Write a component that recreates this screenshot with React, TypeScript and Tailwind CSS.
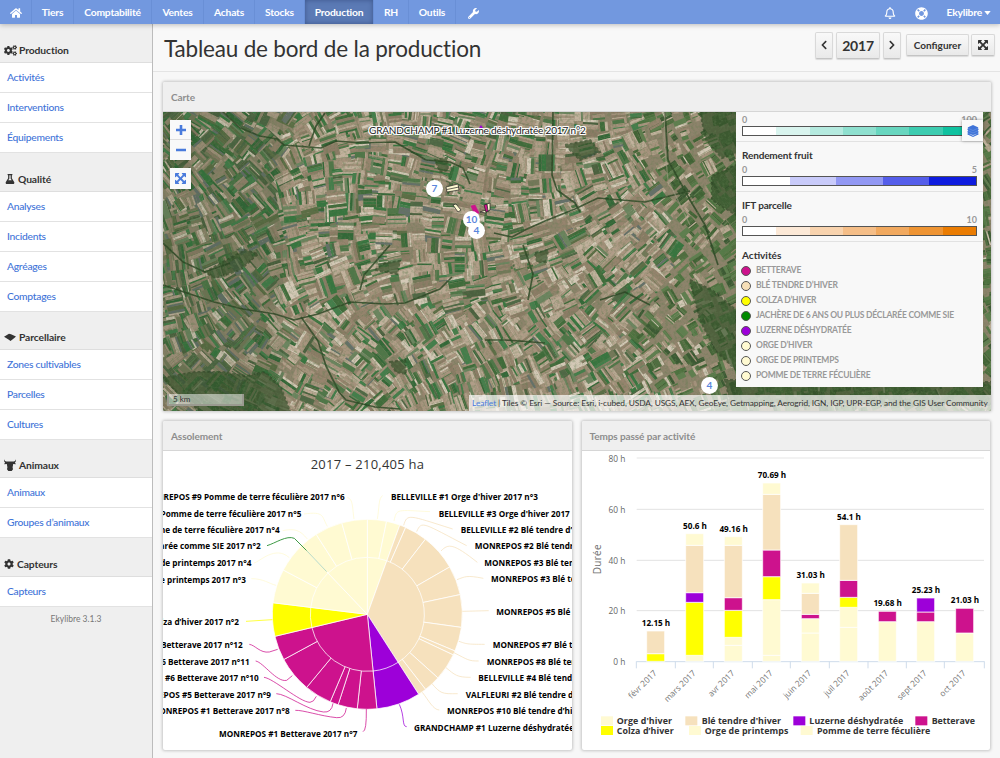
import React from "react";
import {
  FaHome, FaWrench, FaRegBell, FaLifeRing, FaCogs, FaFlask, FaCog,
  FaChevronLeft, FaChevronRight,
} from "react-icons/fa";

const CREAM = "#fffad2";
const TAN = "#f6e1bd";
const YELLOW = "#ffff00";
const PURPLE = "#9d00d9";
const PINK = "#cd128d";

/* ---------- icons ---------- */

const ExpandIcon = ({ className }: { className?: string }) => (
  <svg viewBox="0 0 12 12" className={className} fill="currentColor">
    <path d="M0 .5Q0 0 .5 0H4.2Q4.9.3 4.5.8L3.4 1.9 6 4.5 8.6 1.9 7.5.8Q7.100.3 7.800 0H11.500Q12 0 12 .5V4.200Q11.700 4.900 11.200 4.500L10.100 3.400 7.500 6 10.100 8.600 11.200 7.500Q11.700 7.100 12 7.800V11.500Q12 12 11.500 12H7.800Q7.100 11.700 7.500 11.200L8.600 10.100 6 7.500 3.400 10.100 4.500 11.200Q4.900 11.700 4.200 12H.5Q0 12 0 11.500V7.800Q.3 7.100.8 7.500L1.900 8.600 4.500 6 1.900 3.400.8 4.500Q.3 4.900 0 4.200Z" />
  </svg>
);

const FieldIcon = ({ className }: { className?: string }) => (
  <svg viewBox="0 0 12 12" className={className} fill="currentColor">
    <path d="M0 5.800 5 2.800 7 3.300 12 5.600 10 7.300 6.500 10 4.500 8.600Z" />
  </svg>
);

const BullIcon = ({ className }: { className?: string }) => (
  <svg viewBox="0 0 12 12" className={className} fill="currentColor">
    <path d="M.7 0Q0 2.600 2.500 2.500H9.500Q12 2.600 11.300 0 12.700 2.200 10.900 3.500L11.900 5.200 9.200 4.900 8.600 8.300 9 10.200 7.700 12H4.300L3 10.200 3.400 8.300 2.800 4.900.1 5.200 1.100 3.500Q-.7 2.200.7 0Z" />
  </svg>
);

const LayersIcon = ({ className }: { className?: string }) => (
  <svg viewBox="0 0 12 12" className={className} fill="currentColor">
    <path d="M6 0 11.500 2.500 6 5 .5 2.500Z" />
    <path d="M.5 3.500 6 6 11.500 3.500V5.100L6 7.600.5 5.100ZM.5 6 6 8.500 11.500 6V7.400L6 9.900.5 7.400ZM.5 8.300 6 10.800 11.500 8.300V9.500L6 12 .5 9.500Z" />
    <path d="M1 2.500H11V9.500H1Z" opacity=".85" />
  </svg>
);

/* ---------- navigation ---------- */

const tabs = [
  { label: "Tiers", w: "w-[42px]" },
  { label: "Comptabilité", w: "w-[78px]" },
  { label: "Ventes", w: "w-[52px]" },
  { label: "Achats", w: "w-[51px]" },
  { label: "Stocks", w: "w-[50px]" },
  { label: "Production", w: "w-[69px]", active: true },
  { label: "RH", w: "w-[35px]" },
  { label: "Outils", w: "w-[47px]" },
];

function TopBar() {
  return (
    <nav className="relative z-10 flex h-6 items-stretch bg-[#7298df] text-[10.300px] font-bold tracking-[-0.2px] text-white shadow-[0_1px_5px_rgba(0,0,0,0.25)]">
      <div className="flex w-8 items-center justify-center border-r border-[#698fd6] pt-px">
        <FaHome className="size-[12px]" />
      </div>
      {tabs.map((t) => (
        <div
          key={t.label}
          className={`${t.w} flex items-center justify-center border-r border-[#698fd6] pt-[2px] ${
            t.active ? "bg-[#5b7ab5] shadow-[inset_0_0_5px_rgba(30,50,100,0.5)]" : ""
          }`}
        >
          {t.label}
        </div>
      ))}
      <div className="flex w-[35px] items-center justify-center pt-[2px]">
        <FaWrench className="size-[11px]" />
      </div>
      <div className="ml-auto flex items-center pr-[9px] pt-[2px]">
        <FaRegBell className="mr-[19px] size-[12px]" />
        <FaLifeRing className="mr-[19px] size-[13px]" />
        <span>Ekylibre</span>
        <svg viewBox="0 0 8 5" className="ml-[2px] h-[4px] w-[7px]" fill="currentColor"><path d="M0 0H8L4 5Z" /></svg>
      </div>
    </nav>
  );
}

const sections = [
  { title: "Production", icon: <FaCogs className="size-[13px]" />, h: "h-[39px]", gap: "gap-[2px]", items: ["Activités", "Interventions", "Équipements"] },
  { title: "Qualité", icon: <FaFlask className="mx-px size-[10px]" />, h: "h-[39px]", gap: "gap-[2px]", items: ["Analyses", "Incidents", "Agréages", "Comptages"] },
  { title: "Parcellaire", icon: <FieldIcon className="size-[12px]" />, h: "h-[38px]", gap: "gap-[3px]", items: ["Zones cultivables", "Parcelles", "Cultures"] },
  { title: "Animaux", icon: <BullIcon className="size-[12px]" />, h: "h-[38px]", gap: "gap-[3px]", items: ["Animaux", "Groupes d’animaux"] },
  { title: "Capteurs", icon: <FaCog className="size-[10px]" />, h: "h-[39px]", gap: "gap-[3px]", items: ["Capteurs"] },
];

function Sidebar() {
  return (
    <aside className="w-[153px] shrink-0 border-r border-[#bcbcbc] bg-[#efefef] text-[10.300px]">
      {sections.map((s) => (
        <section key={s.title}>
          <h2 className={`${s.h} ${s.gap} flex items-end border-b border-[#dedede] pb-[5px] pl-1 font-bold leading-[14px] tracking-[-0.1px] text-[#333]`}>
            <span className="flex h-[14px] items-center">{s.icon}</span>
            {s.title}
          </h2>
          <ul>
            {s.items.map((i) => (
              <li key={i} className="flex h-[30px] items-center border-b border-[#e2e2e2] bg-white pl-[7px] font-medium tracking-[-0.260px] text-[#3f74d8]">
                {i}
              </li>
            ))}
          </ul>
        </section>
      ))}
      <p className="pt-[5px] text-center text-[8.500px] leading-[14px] text-[#777]">Ekylibre 3.1.3</p>
    </aside>
  );
}

const btn =
  "flex items-center justify-center rounded-[2px] border border-[#d9d9d9] border-b-[#c4c4c4] bg-gradient-to-b from-[#f9f9f9] to-[#e9e9e9] text-[#333] shadow-[0_1px_1px_rgba(0,0,0,0.12)]";

function TitleBar() {
  return (
    <header className="flex h-12 items-center border-b border-[#e4e4e4] bg-[#f8f8f8] pl-[11px] pr-[5px]">
      <h1 className="pt-[2px] text-[22.500px] leading-[30px] tracking-[-0.190px] text-[#333]">Tableau de bord de la production</h1>
      <div className="-mt-[5px] ml-auto flex items-center">
        <div className={`${btn} h-[27px] w-[18px]`}><FaChevronLeft className="size-[10px]" /></div>
        <div className={`${btn} ml-[3px] h-[27px] w-[44px] text-[14px] font-bold tracking-[-0.200px]`}>2017</div>
        <div className={`${btn} ml-[3px] h-[27px] w-[18px]`}><FaChevronRight className="size-[10px]" /></div>
        <div className={`${btn} ml-[5px] h-[22px] w-[63px] text-[10px] font-bold`}>Configurer</div>
        <div className={`${btn} ml-[2px] h-[22px] w-[24px]`}><ExpandIcon className="size-[10px]" /></div>
      </div>
    </header>
  );
}

function Card({ title, className, children }: { title: string; className: string; children: React.ReactNode }) {
  return (
    <section className={`${className} flex flex-col overflow-hidden rounded-[2px] bg-white shadow-[0_0_3px_1px_rgba(0,0,0,0.2)]`}>
      <h3 className="h-[30px] shrink-0 border-b border-[#d6d6d6] bg-[#efefef] pl-2 text-[10px] font-bold leading-[30px] tracking-[-0.100px] text-[#8d8d8d]">
        {title}
      </h3>
      {children}
    </section>
  );
}

/* ---------- map ---------- */

function makeRandom(seed: number) {
  let s = seed;
  return () => {
    s = (s * 1664525 + 1013904223) >>> 0;
    return s / 4294967296;
  };
}

const soil = ["#a8957f", "#b9a893", "#96846e", "#a3917b", "#d3c8b6", "#8c7c66", "#b09d88", "#c2b29d"];
const crops = ["#37753f", "#437e4b", "#4f7648", "#3f6b3a", "#336838", "#6c8560"];
const dim = ["#5c6d45", "#747859", "#4b603f", "#65706a", "#90866c", "#4f6745"];
const woods = ["#416335", "#4d723f", "#3b5933", "#567a48", "#5f7f4f", "#4f6d3f"];

function buildFields() {
  const rnd = makeRandom(77);
  const pick = (a: string[]) => a[Math.floor(rnd() * a.length)];
  const spots: [number, number][] = [];
  for (let y = 106; y < 418; y += 11) for (let x = 158; x < 1000; x += 11) spots.push([x, y]);
  for (let i = spots.length - 1; i > 0; i--) {
    const j = Math.floor(rnd() * (i + 1));
    [spots[i], spots[j]] = [spots[j], spots[i]];
  }
  return spots.map(([x, y]) => {
    const cx = x + rnd() * 10;
    const cy = y + rnd() * 10;
    const east = cx > 655 + 20 * Math.sin(cy / 30);
    const west = cx < 290 - (cy - 112) * 0.1;
    let angle = -14 + 16 * Math.sin(cx / 60) + 18 * Math.cos(cy / 55 + cx / 130) + (rnd() - 0.5) * 18;
    if (west) angle += 70;
    else if (cy > 310) angle += 75;
    if (rnd() < 0.3) angle += 90;
    const len = (east ? 5 : 9) + rnd() * 10;
    const across = (east ? 4 : 9) + rnd() * 10;
    const strips: { o: number; w: number; c: string }[] = [];
    let o = -across / 2;
    while (o < across / 2) {
      const w = 1 + rnd() * (rnd() < 0.22 ? 6 : 2.2);
      const r = rnd();
      const c = east
        ? r < (cx > 712 ? 0.88 : 0.58) ? pick(woods) : pick(soil)
        : west
          ? r < 0.42 ? pick(dim) : r < 0.7 ? pick(crops) : pick(soil)
          : r < 0.1 ? pick(dim) : r < 0.37 ? pick(crops) : pick(soil);
      strips.push({ o, w, c });
      o += w;
    }
    return { cx, cy, angle, len, strips };
  });
}
const fields = buildFields();

const rivers = [
  "M222 111 240 128 260 136 277 139 284 145 321 148 336 141 362 143 395 142 414 153 426 160 450 162 463 168 470 184",
  "M309 146 316 126 325 113",
  "M163 285 184 292 214 302 243 309 275 314 294 320 318 314 350 302 385 304 405 303 440 289 452 277",
  "M301 317 318 341 326 366 339 392 346 400 375 407 400 409",
  "M494 233 512 237 525 230 545 221 575 209 598 198 645 202 690 191",
  "M553 112 552 175 557 190 575 203 580 212",
  "M523 245 533 274 528 300",
  "M163 243 183 262 205 272 230 263",
  "M485 340 505 340 545 343",
  "M665 112 668 160 690 200 705 225 718 265",
  "M600 300 625 292 650 305",
  "M360 290 364 275 390 245",
];
const forests = [
  "M163 378 195 372 222 372 246 376 265 372 281 388 290 411 200 411 180 395Z",
  "M375 270 385 263 400 261 397 274Z",
  "M435 160 447 158 448 170 440 172Z",
  "M700 112 745 112 745 150 722 158 706 140Z",
  "M712 176 736 165 736 215 712 200Z",
  "M690 280 712 290 736 310 736 370 715 350 700 320Z",
  "M725 380 991 382 991 405 730 402Z",
  "M535 253 548 250 546 262 537 262Z",
  "M565 145 590 140 600 152 580 160Z",
  "M205 272 245 250 258 254 240 270 215 278Z",
  "M390 362 405 360 406 374 396 372Z",
];

function Satellite() {
  return (
    <svg viewBox="163 112 828 299" className="block h-[299px] w-full" preserveAspectRatio="none">
      <defs>
        <filter id="grain" x="0" y="0" width="100%" height="100%">
          <feTurbulence type="fractalNoise" baseFrequency=".35" numOctaves="3" seed="4" />
          <feColorMatrix values="0 0 0 0 .12  0 0 0 0 .2  0 0 0 0 .08  1.600 0 0 0 -.68" />
        </filter>
      </defs>
      <rect x="163" y="112" width="828" height="299" fill="#8d836b" />
      {fields.map((f, i) => (
        <g key={i} transform={`translate(${f.cx.toFixed(1)} ${f.cy.toFixed(1)}) rotate(${f.angle.toFixed(0)})`}>
          {f.strips.map((s, j) => (
            <rect key={j} x={-f.len / 2} y={s.o} width={f.len} height={s.w} fill={s.c} />
          ))}
        </g>
      ))}
      <rect x="163" y="112" width="120" height="299" fill="#1f3a1d" opacity=".1" />
      {forests.map((d) => (
        <path key={d} d={d} fill="#34512a" opacity=".68" stroke="#2d4624" strokeWidth="2" strokeDasharray="3 2" />
      ))}
      {rivers.map((d) => (
        <path key={d} d={d} fill="none" stroke="#2c4725" strokeWidth="1.700" opacity=".85" strokeLinejoin="round" />
      ))}
      <path d="M665 112 664 140 668 180 690 225" stroke="#aaa08c" strokeWidth="1.200" fill="none" opacity=".6" />
      <rect x="163" y="112" width="828" height="299" filter="url(#grain)" opacity=".65" />
      <g stroke="#222" strokeWidth=".7">
        <path d="M446 187 458 184 459 190 447 192Z" fill={CREAM} />
        <path d="M447 189.500 459 187" />
        <path d="M453 205 456 204 461 210 458 212Z" fill={CREAM} />
        <path d="M471 206 475 205 479 213 475 215Z" fill={PINK} stroke={PINK} />
        <path d="M480 212 486 210 486 213Z" fill={CREAM} />
        <path d="M484 205 487 204 489 211 486 212Z" fill={PINK} />
        <path d="M487 204 490 203 490 210 488 211Z" fill={CREAM} />
      </g>
      <path d="M479 128 481 125 483 128Z" fill={PURPLE} />
    </svg>
  );
}

const ramps = [
  { title: "", max: "100", colors: ["bg-white", "bg-[#d9f4ee]", "bg-[#b5eadf]", "bg-[#8fe0cf]", "bg-[#68d6bf]", "bg-[#3dccb0]", "bg-[#10c2a0]"] },
  { title: "Rendement fruit", max: "5", colors: ["bg-white", "bg-[#c9cbfa]", "bg-[#9298f3]", "bg-[#555eea]", "bg-[#0f1ddf]"] },
  { title: "IFT parcelle", max: "10", colors: ["bg-white", "bg-[#fce9d7]", "bg-[#f8d3ae]", "bg-[#f5be88]", "bg-[#f1a95f]", "bg-[#ee9433]", "bg-[#ea7c02]"] },
];
const activities = [
  ["BETTERAVE", "bg-[#cd128d]"],
  ["BLÉ TENDRE D’HIVER", "bg-[#f6dfb8]"],
  ["COLZA D’HIVER", "bg-[#ffff00]"],
  ["JACHÈRE DE 6 ANS OU PLUS DÉCLARÉE COMME SIE", "bg-[#008a00]"],
  ["LUZERNE DÉSHYDRATÉE", "bg-[#9d00d9]"],
  ["ORGE D’HIVER", "bg-[#fffad2]"],
  ["ORGE DE PRINTEMPS", "bg-[#fffad2]"],
  ["POMME DE TERRE FÉCULIÈRE", "bg-[#fffad2]"],
];

function MapLegend() {
  return (
    <div className="absolute right-2 top-0 h-[275px] w-[247px] bg-[#f8f8f8]">
      {ramps.map((r) => (
        <div key={r.max} className={`border-b border-[#e2e2e2] px-[6px] pb-[5px] ${r.title ? "pt-[5px]" : "pt-px"}`}>
          {r.title && <h4 className="h-[16px] text-[10px] font-bold leading-[16px] tracking-[-0.150px] text-[#333]">{r.title}</h4>}
          <div className="flex h-[13px] justify-between text-[9px] font-bold leading-[13px] text-[#999]">
            <span>0</span>
            <span>{r.max}</span>
          </div>
          <div className="flex h-[10px] border border-[#555]">
            {r.colors.map((c) => (
              <div key={c} className={`${c} flex-1`} />
            ))}
          </div>
        </div>
      ))}
      <div className="px-[5px] pt-[5px]">
        <h4 className="h-[16px] pl-px text-[10px] font-bold leading-[16px] text-[#333]">Activités</h4>
        {activities.map(([n, c]) => (
          <div key={n} className="flex h-[15px] items-center gap-[5px] whitespace-nowrap text-[8.500px] font-bold tracking-[-0.230px] text-[#999]">
            <span className={`${c} size-[10px] rounded-full border border-[#555]`} />
            {n}
          </div>
        ))}
      </div>
    </div>
  );
}

const markers = [
  { n: "4", pos: "left-[305px] top-[110px]" },
  { n: "10", pos: "left-[300px] top-[99px]" },
  { n: "7", pos: "left-[263px] top-[68px]" },
  { n: "4", pos: "left-[538px] top-[265px]" },
];

function MapPanel() {
  const control = "flex h-5 w-[21px] items-center justify-center bg-[#f9f9f9] text-[#4a7bdc]";
  return (
    <div className="relative h-[299px]">
      <Satellite />
      <div className="absolute left-[206px] top-[10px] whitespace-nowrap text-[10px] leading-[16px] tracking-[-0.160px] text-[#222] [text-shadow:1px_0_white,-1px_0_white,0_1px_white,0_-1px_white,1px_1px_white,-1px_-1px_white,1px_-1px_white,-1px_1px_white]">
        GRANDCHAMP #1 Luzerne déshydratée 2017 n°2
      </div>
      {markers.map((m) => (
        <div key={m.pos} className={`${m.pos} absolute flex size-[17px] items-center justify-center rounded-full bg-white text-[10px] font-bold text-[#5b86dc]`}>
          {m.n}
        </div>
      ))}
      <div className="absolute left-[7px] top-[8px] shadow-sm">
        <div className={`${control} border-b border-[#ddd]`}>
          <svg viewBox="0 0 10 10" className="size-[10px]" fill="currentColor"><path d="M3.700 0H6.300V3.700H10V6.300H6.300V10H3.700V6.300H0V3.700H3.700Z" /></svg>
        </div>
        <div className={`${control}`}>
          <svg viewBox="0 0 10 10" className="size-[10px]" fill="currentColor"><path d="M0 3.700H10V6.300H0Z" /></svg>
        </div>
      </div>
      <div className="absolute left-[7px] top-[56px] shadow-sm">
        <div className={`${control} h-[21px]`}><ExpandIcon className="size-[11px]" /></div>
      </div>
      <div className="absolute bottom-[5px] left-[4px] h-[12px] w-[77px] border-2 border-t-0 border-[#9a9a90] bg-white/50 pl-[4px] text-[8px] leading-[10px] text-[#333]">
        5 km
      </div>
      <div className="absolute bottom-0 right-0 flex h-[16px] w-[522px] items-center bg-white/70 pl-[3px] text-[8.300px] tracking-[-0.080px] text-[#333]">
        <span className="whitespace-nowrap"><span className="text-[#4a7bdc]">Leaflet</span> | Tiles © Esri — Source: Esri, i-cubed, USDA, USGS, AEX, GeoEye, Getmapping, Aerogrid, IGN, IGP, UPR-EGP, and the GIS User Community</span>
      </div>
      <MapLegend />
      <div className="absolute right-[8px] top-[8px] flex size-[21px] items-center justify-center bg-[#f9f9f9] text-[#3f74d8] shadow-[0_0_3px_rgba(0,0,0,0.4)]">
        <LayersIcon className="size-[12px]" />
      </div>
    </div>
  );
}

/* ---------- pie ---------- */

const CX = 622, CY = 598, R = 285, RI = 171;
const pt = (a: number, r: number) => {
  const t = (a * Math.PI) / 180;
  return `${(CX + r * Math.sin(t)).toFixed(1)} ${(CY - r * Math.cos(t)).toFixed(1)}`;
};
const wedge = (a: number, b: number, r: number) =>
  `M${CX} ${CY}L${pt(a, r)}A${r} ${r} 0 0 1 ${pt(b, r)}Z`;

const slices: { color: string; cuts: number[] }[] = [
  { color: CREAM, cuts: [0, 11.7, 20] },
  { color: TAN, cuts: [20, 23.8, 37.7, 60.1, 78, 97.9, 112.7, 115.3, 132, 142.2, 147.3] },
  { color: PURPLE, cuts: [147.3, 174.2] },
  { color: PINK, cuts: [174.2, 186.1, 197.9, 203, 219.7, 241.6, 256.6] },
  { color: YELLOW, cuts: [256.6, 277] },
  { color: CREAM, cuts: [277, 297.8, 316.4] },
  { color: CREAM, cuts: [316.4, 327.4, 344.4, 360] },
];

const leaders: [string, string][] = [
  ["M562 247C580 252 577 280 582 312", CREAM],
  ["M432 297C495 288 485 305 502 334", CREAM],
  ["M368 347C405 340 420 345 442 372", CREAM],
  ["M282 444C300 440 345 390 388 428", CREAM],
  ["M274 491C310 491 325 505 348 511", CREAM],
  ["M668 242C655 248 658 280 652 312", CREAM],
  ["M810 290C710 285 710 280 702 318", CREAM],
  ["M878 342C745 300 742 295 731 331", TAN],
  ["M920 392C790 325 785 315 770 350", TAN],
  ["M952 442C880 385 865 385 843 408", TAN],
  ["M970 490C920 480 915 485 891 494", TAN],
  ["M907 589 986 587", TAN],
  ["M897 679C920 687 920 688 974 688", TAN],
  ["M880 712C925 735 925 738 956 738", TAN],
  ["M858 758C885 780 890 787 932 787", TAN],
  ["M815 805C842 836 845 837 893 836", TAN],
  ["M787 832C805 855 820 885 838 885", TAN],
  ["M718 868C735 905 725 935 740 935", PURPLE],
  ["M258 619 337 614", YELLOW],
  ["M268 688C285 690 300 715 328 711L353 703", PINK],
  ["M287 738C310 742 350 803 380 796L397 782", PINK],
  ["M312 787C340 790 420 862 450 862Q461 862 469 844", PINK],
  ["M349 836C380 837 440 885 490 891Q515 894 519 865", PINK],
  ["M406 886C430 885 480 903 530 908Q555 911 559 879", PINK],
  ["M609 950Q620 948 619 882", PINK],
];

const rightLabels: [number, number, string][] = [
  [694, 247, "BELLEVILLE #1 Orge d'hiver 2017 n°3"],
  [837, 297, "BELLEVILLE #3 Orge d'hiver 2017 n°4"],
  [903, 346, "BELLEVILLE #2 Blé tendre d’hiver 2017"],
  [945, 395, "MONREPOS #2 Blé tendre d’hiver"],
  [974, 445, "MONREPOS #3 Blé tendre d’hiver"],
  [994, 494, "MONREPOS #3 Blé tendre"],
  [1010, 591, "MONREPOS #5 Blé tendre"],
  [999, 692, "MONREPOS #7 Blé tendre"],
  [981, 741, "MONREPOS #8 Blé tendre"],
  [956, 790, "BELLEVILLE #4 Blé tendre"],
  [918, 840, "VALFLEURI #2 Blé tendre d’hiver"],
  [862, 889, "MONREPOS #10 Blé tendre d’hiver"],
  [763, 939, "GRANDCHAMP #1 Luzerne déshydratée 2017"],
];
const leftLabels: [number, number, string][] = [
  [555, 247, "MONREPOS #9 Pomme de terre féculière 2017 n°6"],
  [425, 297, "Pomme de terre féculière 2017 n°5"],
  [360, 346, "Pomme de terre féculière 2017 n°4"],
  [303, 395, "déclarée comme SIE 2017 n°2"],
  [275, 444, "Orge de printemps 2017 n°4"],
  [259, 496, "Orge de printemps 2017 n°3"],
  [238, 622, "Colza d’hiver 2017 n°2"],
  [249, 692, "Betterave 2017 n°12"],
  [270, 741, "#6 Betterave 2017 n°11"],
  [297, 790, "#6 Betterave 2017 n°10"],
  [334, 840, "MONREPOS #5 Betterave 2017 n°9"],
  [390, 889, "MONREPOS #1 Betterave 2017 n°8"],
  [593, 957, "MONREPOS #1 Betterave 2017 n°7"],
];

function CropPie() {
  return (
    <svg viewBox="163 451 409 299" className="block h-[299px] w-[409px] font-['Open_Sans',sans-serif]">
      <g transform="translate(160 415) scale(.33333)">
        <text x="622" y="161" textAnchor="middle" fontSize="39" textLength="340" fill="#333">2017 – 210,405 ha</text>
        {slices.map((s, i) => (
          <g key={i}>
            {s.cuts.slice(1).map((b, j) => (
              <path key={j} d={wedge(s.cuts[j], b, R)} fill={s.color} stroke="#fff" strokeOpacity=".75" strokeWidth="3" />
            ))}
          </g>
        ))}
        {slices.map((s, i) => (
          <path key={i} d={wedge(s.cuts[0], s.cuts[s.cuts.length - 1], RI)} fill={s.color} stroke="#fff" strokeOpacity=".75" strokeWidth="3" />
        ))}
        {leaders.map(([d, c]) => (
          <path key={d} d={d} fill="none" stroke={c} strokeWidth="3" opacity=".75" />
        ))}
        <path d="M321 392C345 385 380 360 403 370L440 407" fill="none" stroke="#3d9a45" strokeWidth="3" />
        <path d="M440 407 500 470" fill="none" stroke="#a9d3b0" strokeWidth="2.500" />
        <g fontSize="24.600" fontWeight="700" fill="#000">
          {rightLabels.map(([x, y, t]) => (
            <text key={y} x={x - 1} y={y + 8}>{t}</text>
          ))}
          {leftLabels.map(([x, y, t]) => (
            <text key={y} x={x - 1} y={y + 8} textAnchor="end">{t}</text>
          ))}
        </g>
      </g>
    </svg>
  );
}

/* ---------- stacked bars ---------- */

const months: { x: number; name: string; total: string; base: number; parts: [string, number][] }[] = [
  { x: 215, name: "févr 2017", total: "12.15 h", base: 739, parts: [[YELLOW, 716], [TAN, 648]] },
  { x: 332, name: "mars 2017", total: "50.6 h", base: 739, parts: [[CREAM, 721], [YELLOW, 562], [PURPLE, 533], [TAN, 391], [CREAM, 356]] },
  { x: 448, name: "avr 2017", total: "49.16 h", base: 739, parts: [[CREAM, 691], [CREAM, 667], [YELLOW, 586], [PINK, 548], [TAN, 391], [CREAM, 365]] },
  { x: 563, name: "mai 2017", total: "70.69 h", base: 739, parts: [[CREAM, 721], [CREAM, 554], [YELLOW, 485], [PINK, 405], [TAN, 238], [CREAM, 204]] },
  { x: 679, name: "juin 2017", total: "31.03 h", base: 739, parts: [[CREAM, 654], [CREAM, 611], [PINK, 598], [TAN, 535], [CREAM, 504]] },
  { x: 794, name: "juil 2017", total: "54.1 h", base: 739, parts: [[CREAM, 637], [CREAM, 577], [YELLOW, 547], [PINK, 496], [TAN, 329]] },
  { x: 910, name: "août 2017", total: "19.68 h", base: 739, parts: [[CREAM, 620], [PINK, 589]] },
  { x: 1025, name: "sept 2017", total: "25.23 h", base: 739, parts: [[CREAM, 620], [PINK, 591], [PURPLE, 549]] },
  { x: 1142, name: "oct 2017", total: "21.03 h", base: 739, parts: [[CREAM, 654], [PINK, 580]] },
];

const barLegend: [number, number, string, string, number, number][] = [
  [78, 904, CREAM, "Orge d'hiver", 125, 166],
  [331, 904, TAN, "Blé tendre d'hiver", 380, 238],
  [655, 904, PURPLE, "Luzerne déshydratée", 703, 282],
  [1021, 904, PINK, "Betterave", 1070, 130],
  [78, 933, YELLOW, "Colza d’hiver", 125, 171],
  [342, 933, CREAM, "Orge de printemps", 389, 251],
  [677, 933, CREAM, "Pomme de terre féculière", 726, 340],
];

function TimeBars() {
  return (
    <svg viewBox="582 451 409 299" className="block h-[299px] w-[409px] font-['Open_Sans',sans-serif]">
      <g transform="translate(575 415) scale(.33333)">
        {[["80 h", 129], ["60 h", 283], ["40 h", 436], ["20 h", 587], ["0 h", 739]].map(([t, y], i) => (
          <g key={t}>
            {i < 4 && <path d={`M185 ${y}H1227`} stroke={i ? "#e2e2e2" : "#eeeeee"} strokeWidth={i ? 3 : 5} />}
            <text x="151" y={Number(y) + 11} textAnchor="end" fontSize="25" fill="#666">{t}</text>
          </g>
        ))}
        <text transform="translate(78 433) rotate(-90)" textAnchor="middle" fontSize="30" textLength="90" fill="#707070">Durée</text>
        <path d="M184 740H1228" stroke="#cfdceb" strokeWidth="3" />
        {[184, 301, 415, 532, 646, 763, 879, 994, 1108, 1228].map((x) => (
          <path key={x} d={`M${x} 739V760`} stroke="#cfdceb" strokeWidth="3" />
        ))}
        {months.map((m) => (
          <g key={m.name}>
            {m.parts.map(([c, top], i) => {
              const bottom = i ? m.parts[i - 1][1] : m.base;
              return <rect key={i} x={m.x} y={top} width="54" height={bottom - top} fill={c} stroke="#fff" strokeOpacity=".7" strokeWidth="3" />;
            })}
            <text x={m.x + 28} y={m.parts[m.parts.length - 1][1] - 15} textAnchor="middle" fontSize="24.500" fontWeight="700" fill="#000">{m.total}</text>
            <text transform={`translate(${m.x + 32} 776) rotate(-45)`} textAnchor="end" fontSize="25" fill="#777">{m.name}</text>
          </g>
        ))}
        {barLegend.map(([x, y, c, t, tx, len]) => (
          <g key={t}>
            <rect x={x} y={y} width="36" height="27" fill={c} />
            <text x={tx} y={y + 24} fontSize="26.500" fontWeight="700" textLength={len} fill="#333">{t}</text>
          </g>
        ))}
      </g>
    </svg>
  );
}

export default function App() {
  return (
    <div className="flex h-[758px] w-[1000px] flex-col overflow-hidden bg-[#f7f7f7] font-[Lato,sans-serif]">
      <TopBar />
      <div className="flex min-h-0 flex-1">
        <Sidebar />
        <main className="flex min-w-0 flex-1 flex-col">
          <TitleBar />
          <div className="flex flex-col gap-[10px] px-[10px] pt-[10px]">
            <Card title="Carte" className="h-[329px] w-[828px]">
              <MapPanel />
            </Card>
            <div className="flex gap-[10px]">
              <Card title="Assolement" className="h-[329px] w-[409px]">
                <CropPie />
              </Card>
              <Card title="Temps passé par activité" className="h-[329px] w-[409px]">
                <TimeBars />
              </Card>
            </div>
          </div>
        </main>
      </div>
    </div>
  );
}
